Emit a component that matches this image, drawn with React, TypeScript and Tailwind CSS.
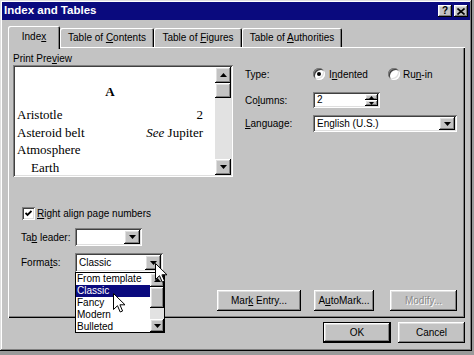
import React from "react";

// bevel styles, Win95 look
const RAISED =
  "shadow-[inset_-1px_-1px_0_#000,inset_1px_1px_0_#fff,inset_-2px_-2px_0_#808080,inset_2px_2px_0_#dfdfdf]";
const SUNKEN =
  "shadow-[inset_1px_1px_0_#808080,inset_-1px_-1px_0_#fff,inset_2px_2px_0_#404040,inset_-2px_-2px_0_#dfdfdf]";

function Tri({ up = false, w = 7 }: { up?: boolean; w?: number }) {
  const h = Math.ceil(w / 2);
  return (
    <svg width={w} height={h} viewBox={`0 0 ${w} ${h}`}>
      <path d={up ? `M${w / 2} 0L${w} ${h}H0z` : `M0 0H${w}L${w / 2} ${h}z`} fill="#000" />
    </svg>
  );
}

function ArrowBtn({ up = false, className = "" }: { up?: boolean; className?: string }) {
  return (
    <div className={`flex items-center justify-center bg-[#c3c3c3] ${RAISED} ${className}`}>
      <Tri up={up} />
    </div>
  );
}

function Combo({ w, h, text }: { w: string; h: string; text?: string }) {
  return (
    <div className={`flex bg-white p-[2px] ${SUNKEN} ${w} ${h}`}>
      <div className="flex-1 pl-[2px] leading-none flex items-center">{text}</div>
      <ArrowBtn className="w-[16px]" />
    </div>
  );
}

function Btn({
  w,
  children,
  disabled = false,
  def = false,
}: {
  w: string;
  children: React.ReactNode;
  disabled?: boolean;
  def?: boolean;
}) {
  return (
    <div className={`h-[21px] ${w} ${def ? "border border-black" : ""}`}>
      <div
        className={`h-full flex items-center justify-center bg-[#c3c3c3] ${RAISED} ${
          disabled ? "text-[#8a8a8a] [text-shadow:1px_1px_0_#fff]" : ""
        }`}
      >
        <span>{children}</span>
      </div>
    </div>
  );
}

function Tab({ w, active = false, children }: { w: string; active?: boolean; children: React.ReactNode }) {
  return (
    <div
      className={`${w} flex items-center justify-center bg-[#c3c3c3] rounded-t-[2px] shadow-[inset_1px_1px_0_#fff,inset_-1px_0_0_#000,inset_-2px_0_0_#808080] ${
        active ? "h-[23px] -mb-[2px] pb-[2px] relative z-10" : "h-[19px]"
      }`}
    >
      <span>{children}</span>
    </div>
  );
}

function Cursor({ className }: { className: string }) {
  return (
    <svg width="13" height="20" viewBox="0 0 13 20" className={`absolute ${className}`}>
      <path
        d="M0.5 0.5V16.5L4.5 12.7L7.2 19L9.6 18L6.9 11.8H12Z"
        fill="#fff"
        stroke="#000"
        strokeWidth="1"
        strokeLinejoin="miter"
      />
    </svg>
  );
}

function Radio({ on }: { on: boolean }) {
  return (
    <div className="w-[12px] h-[12px] rounded-full bg-white flex items-center justify-center shadow-[inset_1px_1px_0_#808080,inset_-1px_-1px_0_#fff,inset_2px_2px_0_#404040,inset_-2px_-2px_0_#dfdfdf]">
      {on && <div className="w-[4px] h-[4px] rounded-full bg-black" />}
    </div>
  );
}

export default function App() {
  const entries: { text: React.ReactNode; page?: React.ReactNode; indent?: boolean }[] = [
    { text: "Aristotle", page: "2" },
    {
      text: "Asteroid belt",
      page: (
        <>
          <i>See</i> Jupiter
        </>
      ),
    },
    { text: "Atmosphere" },
    { text: "Earth", indent: true },
  ];

  return (
    <div className="w-[474px] h-[355px] bg-[#9a9a9a] overflow-hidden font-['Liberation_Sans',Arial,sans-serif] text-[10px] text-black">
      <div className="w-[472px] h-[351px] bg-[#c3c3c3] p-[2px] flex flex-col shadow-[inset_-1px_-1px_0_#000,inset_1px_1px_0_#dfdfdf,inset_-2px_-2px_0_#808080,inset_2px_2px_0_#fff]">
        {/* title bar */}
        <div className="h-[18px] bg-[#0a0a7e] flex items-center pl-[2px] pr-[2px]">
          <div className="flex-1 text-white font-bold text-[11.5px] leading-none">Index and Tables</div>
          <div className="flex gap-[2px]">
            <div className={`w-[14px] h-[12px] bg-[#c3c3c3] ${RAISED} flex items-center justify-center font-bold text-[10px] leading-none`}>
              ?
            </div>
            <div className={`w-[14px] h-[12px] bg-[#c3c3c3] ${RAISED} flex items-center justify-center`}>
              <svg width="8" height="7" viewBox="0 0 8 7">
                <path d="M0.5 0.5L7.5 6.5M7.5 0.5L0.5 6.5" stroke="#000" strokeWidth="1.6" />
              </svg>
            </div>
          </div>
        </div>

        <div className="pl-[6px] pt-[6px]">
          {/* tabs */}
          <div className="flex items-end h-[21px]">
            <Tab w="w-[52px]" active>
              Inde<u>x</u>
            </Tab>
            <Tab w="w-[94px]">
              Table of <u>C</u>ontents
            </Tab>
            <Tab w="w-[88px]">
              Table of <u>F</u>igures
            </Tab>
            <Tab w="w-[100px]">
              Table of <u>A</u>uthorities
            </Tab>
          </div>

          {/* tab page */}
          <div className="relative w-[457px] h-[271px] shadow-[inset_1px_1px_0_#fff,inset_-1px_-1px_0_#000,inset_-2px_-2px_0_#808080]">
            <div className="flex pl-[5px] pt-[6px]">
              <div className="w-[220px]">
                <div className="h-[12px] leading-[12px]">
                  Print Pre<u>v</u>iew
                </div>
                <div className={`h-[112px] flex bg-white p-[2px] ${SUNKEN}`}>
                  <div className="flex-1 pl-[2px] pr-[12px] pt-[16px] font-['Liberation_Serif',serif] text-[13px]">
                    <div className="text-center font-bold leading-[18px]">A</div>
                    <div className="mt-[5px]">
                      {entries.map((e, i) => (
                        <div key={i} className={`flex justify-between leading-[17.5px] ${e.indent ? "pl-[14px]" : ""}`}>
                          <span>{e.text}</span>
                          {e.page && <span>{e.page}</span>}
                        </div>
                      ))}
                    </div>
                  </div>
                  <div className="w-[16px] flex flex-col bg-[#e2e2e2]">
                    <ArrowBtn up className="h-[16px]" />
                    <div className={`h-[15px] bg-[#c3c3c3] ${RAISED}`} />
                    <div className="flex-1" />
                    <ArrowBtn className="h-[16px]" />
                  </div>
                </div>
              </div>

              <div className="ml-[12px] pt-[13px] flex flex-col">
                <div className="flex items-center h-[16px]">
                  <div className="w-[68px]">Type:</div>
                  <div className="flex items-center w-[75px] gap-[4px]">
                    <Radio on />
                    <span>
                      I<u>n</u>dented
                    </span>
                  </div>
                  <div className="flex items-center gap-[3px]">
                    <Radio on={false} />
                    <span>
                      Ru<u>n</u>-in
                    </span>
                  </div>
                </div>
                <div className="flex items-center mt-[10px]">
                  <div className="w-[68px]">
                    Co<u>l</u>umns:
                  </div>
                  <div className={`flex w-[67px] h-[16px] bg-white p-[2px] ${SUNKEN}`}>
                    <div className="flex-1 pl-[2px] flex items-center leading-none">2</div>
                    <div className="w-[13px] flex flex-col">
                      <div className={`flex-1 flex items-center justify-center bg-[#c3c3c3] ${RAISED}`}>
                        <Tri up w={5} />
                      </div>
                      <div className={`flex-1 flex items-center justify-center bg-[#c3c3c3] ${RAISED}`}>
                        <Tri w={5} />
                      </div>
                    </div>
                  </div>
                </div>
                <div className="flex items-center mt-[7px]">
                  <div className="w-[68px]">
                    <u>L</u>anguage:
                  </div>
                  <Combo w="w-[144px]" h="h-[17px]" text="English (U.S.)" />
                </div>
              </div>
            </div>

            {/* lower options */}
            <div className="mt-[30px] ml-[14px] flex items-center h-[13px] gap-[2px]">
              <div className={`w-[13px] h-[13px] bg-white flex items-center justify-center ${SUNKEN}`}>
                <svg width="7" height="7" viewBox="0 0 7 7">
                  <path d="M0.5 3L2.5 5L6.5 1" stroke="#000" strokeWidth="1.8" fill="none" />
                </svg>
              </div>
              <span>
                <u>R</u>ight align page numbers
              </span>
            </div>

            <div className="mt-[8px] ml-[13px] flex items-center">
              <div className="w-[54px]">
                Ta<u>b</u> leader:
              </div>
              <Combo w="w-[67px]" h="h-[18px]" />
            </div>

            <div className="mt-[7px] ml-[13px] flex items-center">
              <div className="w-[54px]">
                Forma<u>t</u>s:
              </div>
              <div className="relative z-20">
                <Combo w="w-[88px]" h="h-[19px]" text="Classic" />
                {/* open list */}
                <div className="absolute left-0 top-full w-[90px] h-[61px] bg-white border border-black flex">
                  <div className="flex-1 leading-[12px]">
                    <div className="pl-[1px]">From template</div>
                    <div className="pl-[1px] bg-[#0a0a7e] text-white">Classic</div>
                    <div className="pl-[1px]">Fancy</div>
                    <div className="pl-[1px]">Modern</div>
                    <div className="pl-[1px]">Bulleted</div>
                  </div>
                  <div className="w-[14px] flex flex-col bg-[#e2e2e2]">
                    <ArrowBtn up className="h-[14px]" />
                    <div className={`h-[21px] bg-[#c3c3c3] ${RAISED}`} />
                    <div className="flex-1" />
                    <ArrowBtn className="h-[13px]" />
                  </div>
                </div>
                <Cursor className="left-[80px] top-[10px]" />
                <Cursor className="left-[38px] top-[40px]" />
              </div>
            </div>

            <div className="mt-[18px] pr-[8px] flex justify-end">
              <Btn w="w-[84px]">
                Mar<u>k</u> Entry...
              </Btn>
              <div className="w-[13px]" />
              <Btn w="w-[60px]">
                A<u>u</u>toMark...
              </Btn>
              <div className="w-[16px]" />
              <Btn w="w-[67px]" disabled>
                Modify...
              </Btn>
            </div>
          </div>

          {/* dialog buttons */}
          <div className="w-[457px] mt-[4px] flex justify-end gap-[7px]">
            <Btn w="w-[68px]" def>
              OK
            </Btn>
            <Btn w="w-[67px]">Cancel</Btn>
          </div>
        </div>
      </div>
    </div>
  );
}
